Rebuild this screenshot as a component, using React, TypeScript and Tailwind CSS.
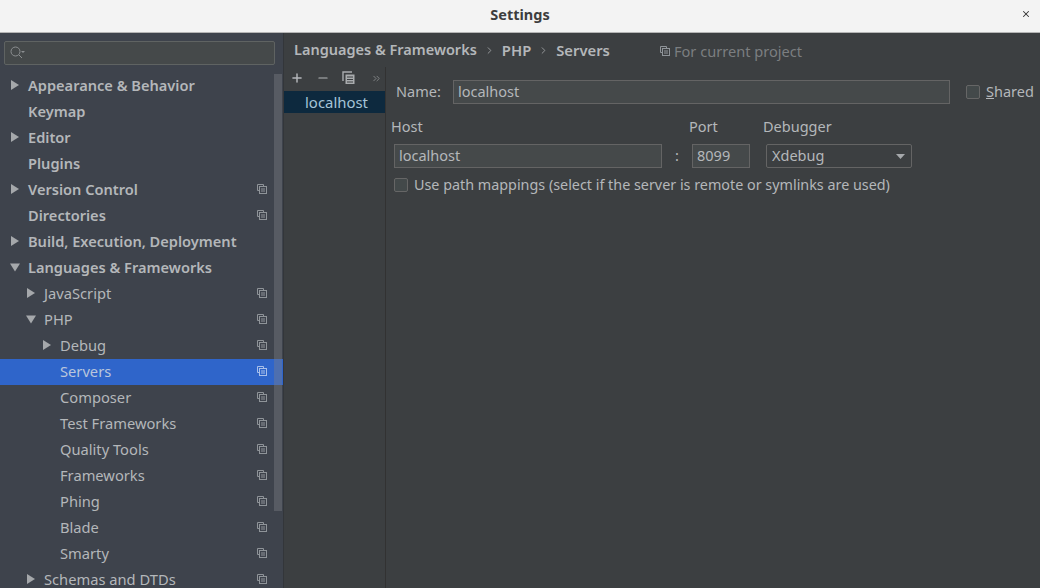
import { ChevronRight, ChevronsRight, Minus, Plus, X } from 'lucide-react';

const font = 'font-["Noto_Sans","Open_Sans",sans-serif]';

// small "project scope" marker shown next to settings rows
function ScopeIcon({ className = 'text-[#8f9499]' }: { className?: string }) {
  return (
    <svg width="10" height="10" viewBox="0 0 10 10" fill="none" stroke="currentColor" className={className}>
      <path d="M6.5 2V.5H.5V6.5H2" />
      <rect x="2.5" y="2.5" width="7" height="7" />
      <path d="M4 5H8M4 7H8" />
    </svg>
  );
}

function Arrow({ down = false }: { down?: boolean }) {
  return (
    <svg width="10" height="10" viewBox="0 0 10 10" className="text-[#a5a8ab]" fill="currentColor">
      {down ? <path d="M0 1.5H10L5 9.5Z" /> : <path d="M1 0V10L9 5Z" />}
    </svg>
  );
}

type Row = { label: string; depth: number; arrow?: 'right' | 'down'; bold?: boolean; scope?: boolean; selected?: boolean };

const rows: Row[] = [
  { label: 'Appearance & Behavior', depth: 0, arrow: 'right', bold: true },
  { label: 'Keymap', depth: 0, bold: true },
  { label: 'Editor', depth: 0, arrow: 'right', bold: true },
  { label: 'Plugins', depth: 0, bold: true },
  { label: 'Version Control', depth: 0, arrow: 'right', bold: true, scope: true },
  { label: 'Directories', depth: 0, bold: true, scope: true },
  { label: 'Build, Execution, Deployment', depth: 0, arrow: 'right', bold: true },
  { label: 'Languages & Frameworks', depth: 0, arrow: 'down', bold: true },
  { label: 'JavaScript', depth: 1, arrow: 'right', scope: true },
  { label: 'PHP', depth: 1, arrow: 'down', scope: true },
  { label: 'Debug', depth: 2, arrow: 'right', scope: true },
  { label: 'Servers', depth: 2, scope: true, selected: true },
  { label: 'Composer', depth: 2, scope: true },
  { label: 'Test Frameworks', depth: 2, scope: true },
  { label: 'Quality Tools', depth: 2, scope: true },
  { label: 'Frameworks', depth: 2, scope: true },
  { label: 'Phing', depth: 2, scope: true },
  { label: 'Blade', depth: 2, scope: true },
  { label: 'Smarty', depth: 2, scope: true },
  { label: 'Schemas and DTDs', depth: 1, arrow: 'right', scope: true },
];

function TreeRow({ row }: { row: Row }) {
  return (
    <div className={`h-[26px] shrink-0 flex items-center pb-[2px] pr-[16px] ${row.selected ? 'bg-[#2f65ca] text-[#b9c6dc]' : 'text-[#b4b7ba]'}`}>
      <div className={`flex items-center flex-1 ${row.depth === 0 ? 'pl-[10px]' : row.depth === 1 ? 'pl-[26px]' : 'pl-[42px]'}`}>
        <span className="w-[18px] shrink-0 flex items-center">{row.arrow && <Arrow down={row.arrow === 'down'} />}</span>
        <span className={`leading-none whitespace-nowrap ${row.bold ? 'text-[14.6px] font-semibold' : 'text-[14.7px]'}`}>{row.label}</span>
      </div>
      {row.scope && <ScopeIcon className={row.selected ? 'text-[#a9c0ea]' : 'text-[#8f9499]'} />}
    </div>
  );
}

function Field({ value, className }: { value: string; className: string }) {
  return (
    <div className={`h-[24px] border border-[#646464] bg-[#45494a] flex items-center px-[4px] text-[14.5px] text-[#b4b7ba] ${className}`}>
      {value}
    </div>
  );
}

export default function App() {
  return (
    <div className={`w-[1040px] h-[588px] overflow-hidden flex flex-col bg-[#3c3f41] ${font}`}>
      <div className="h-[33px] shrink-0 relative flex items-center justify-center pb-[3px] bg-[#f3f3f3] border-b border-[#b5b5b5]">
        <span className="text-[14.5px] font-bold text-[#3d3d3d]">Settings</span>
        <X size={10} strokeWidth={2.5} className="absolute right-[9px] top-[9px] text-[#333]" />
      </div>

      <div className="flex-1 flex min-h-0">
        {/* settings tree */}
        <div className="w-[284px] shrink-0 flex flex-col bg-[#3e434c] border-r border-[#33363a] relative overflow-hidden">
          <div className="pl-[4px] pr-[8px] pt-[8px] pb-[8px] shrink-0">
            <div className="h-[24px] rounded-[2px] border border-[#5f6362] bg-[#45494a] flex items-center pl-[4px]">
              <svg width="16" height="16" viewBox="0 0 16 16" fill="none" stroke="#8c8f91" strokeWidth="1">
                <circle cx="6.5" cy="6.5" r="4.5" />
                <path d="M10 10L13 13" />
                <path d="M12 6H16L14 8Z" fill="#8c8f91" stroke="none" />
              </svg>
            </div>
          </div>
          <div className="flex flex-col">
            {rows.map((row) => (
              <TreeRow key={row.label} row={row} />
            ))}
          </div>
          <div className="absolute left-[274px] top-[41px] w-[8px] h-[437px] bg-[#7c8088]/40" />
        </div>

        {/* page */}
        <div className="flex-1 flex flex-col min-w-0">
          <div className="h-[34px] shrink-0 flex items-center pl-[10px]">
            <span className="text-[14.5px] font-semibold text-[#b4b7ba]">Languages &amp; Frameworks</span>
            <ChevronRight size={11} className="text-[#9a9d9f] mx-[7px]" />
            <span className="text-[14.8px] font-semibold text-[#b4b7ba]">PHP</span>
            <ChevronRight size={11} className="text-[#9a9d9f] mx-[7px]" />
            <span className="text-[14.8px] font-semibold text-[#b4b7ba]">Servers</span>
            <span className="ml-[50px] mt-[3px] flex items-center gap-[4px] text-[14.6px] text-[#7b7e80]">
              <ScopeIcon className="text-[#8f9499]" />
              For current project
            </span>
          </div>

          <div className="flex-1 flex min-h-0">
            {/* server list */}
            <div className="w-[102px] shrink-0 border-r border-[#323232]">
              <div className="h-[24px] flex items-center pb-[2px] text-[#b4b7ba] pl-[6px]">
                <Plus size={14} strokeWidth={2.5} />
                <Minus size={14} strokeWidth={2} className="ml-[12px]" />
                <svg width="14" height="14" viewBox="0 0 14 14" className="ml-[12px] text-[#a9acae]" fill="none" stroke="currentColor" strokeWidth="1.4">
                  <path d="M1 10V1H10" />
                  <rect x="3.5" y="3.5" width="9" height="9.5" fill="currentColor" stroke="none" />
                  <path d="M5 6H11M5 8.5H11M5 11H11" stroke="#3c3f41" strokeWidth="1" />
                </svg>
                <ChevronsRight size={11} strokeWidth={1.5} className="ml-[15px] text-[#9a9d9f]" />
              </div>
              <div className="h-[22px] bg-[#0d293e] flex items-center justify-center text-[14.9px] text-[#a5c4d8] pt-[1px] pl-[4px]">localhost</div>
            </div>

            {/* server form */}
            <div className="flex-1 min-w-0 pt-[13px] pl-[5px]">
              <div className="flex items-center pl-[5px]">
                <span className="w-[57px] text-[14.5px] text-[#b4b7ba]">Name:</span>
                <Field value="localhost" className="w-[497px]" />
                <span className="ml-[16px] w-[14px] h-[14px] rounded-[2px] border border-[#666] bg-[#43494a]" />
                <span className="ml-[6px] text-[14.5px] text-[#b4b7ba]"><span className="underline">S</span>hared</span>
              </div>
              <div className="flex mt-[13px] h-[20px] items-center text-[14.5px] text-[#b4b7ba]">
                <span className="w-[298px]">Host</span>
                <span className="w-[74px]">Port</span>
                <span>Debugger</span>
              </div>
              <div className="flex items-center mt-[7px] pl-[3px]">
                <Field value="localhost" className="w-[268px]" />
                <span className="w-[30px] text-center text-[14.5px] text-[#b4b7ba]">:</span>
                <Field value="8099" className="w-[58px]" />
                <div className="ml-[16px] w-[146px] h-[24px] rounded-[2px] border border-[#646464] bg-[#3c3f41] flex items-center justify-between pl-[5px] pr-[6px] text-[14.5px] text-[#b4b7ba]">
                  Xdebug
                  <svg width="9" height="5" viewBox="0 0 9 5" className="text-[#a5a8ab]" fill="currentColor"><path d="M0 0H9L4.5 5Z" /></svg>
                </div>
              </div>
              <div className="flex items-center mt-[6px] pl-[3px]">
                <span className="w-[14px] h-[14px] rounded-[2px] border border-[#666] bg-[#43494a]" />
                <span className="ml-[6px] text-[14.35px] text-[#b4b7ba] whitespace-nowrap">Use path mappings (select if the server is remote or symlinks are used)</span>
              </div>
            </div>
          </div>
        </div>
      </div>
    </div>
  );
}
